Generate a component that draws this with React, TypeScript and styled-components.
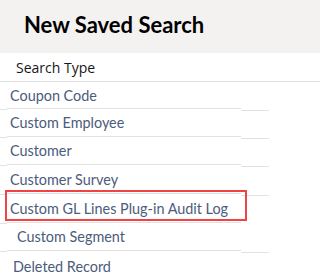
import * as React from "react";
import styled, { createGlobalStyle, css } from "styled-components";

type SearchType = {
  label: string;
  indent: number;
  height: number;
  highlighted?: boolean;
};

const searchTypes: SearchType[] = [
  { label: "Coupon Code", indent: 3, height: 27 },
  { label: "Custom Employee", indent: 3, height: 28 },
  { label: "Customer", indent: 3, height: 28 },
  { label: "Customer Survey", indent: 3, height: 29 },
  { label: "Custom GL Lines Plug-in Audit Log", indent: 3, height: 29, highlighted: true },
  { label: "Custom Segment", indent: 10, height: 28 },
  { label: "Deleted Record", indent: 6, height: 32 },
];

export default function App() {
  return (
    <>
      <GlobalStyle />
      <Page>
        <Header>
          <Title>New Saved Search</Title>
        </Header>
        <ColumnHead>Search Type</ColumnHead>
        <List>
          {searchTypes.map((item) => (
            <Row
              key={item.label}
              $indent={item.indent}
              $height={item.height}
              $highlighted={item.highlighted}
            >
              {item.label}
            </Row>
          ))}
        </List>
      </Page>
    </>
  );
}

const GlobalStyle = createGlobalStyle`
  html, body {
    margin: 0;
    padding: 0;
    background: #fff;
  }
  body {
    font-family: "Lato", "Liberation Sans", sans-serif;
  }
`;

const Page = styled.div`
  width: 100%;
  height: 274px;
  overflow: hidden;
  display: flex;
  flex-direction: column;
  background: #fff;
`;

const Header = styled.div`
  height: 53px;
  flex-shrink: 0;
  background: #f3f2f1;
  display: flex;
  align-items: center;
  padding: 0 0 5px 24px;
  box-sizing: border-box;
`;

const Title = styled.h1`
  margin: 0;
  font-family: "Lato", "Liberation Sans", sans-serif;
  font-weight: 700;
  font-size: 22px;
  color: #000;
`;

const ColumnHead = styled.div`
  height: 28px;
  flex-shrink: 0;
  display: flex;
  align-items: center;
  padding-left: 16px;
  border-bottom: 1px solid #e2e2e2;
  font-family: "Open Sans", "Liberation Sans", sans-serif;
  font-size: 14px;
  font-weight: 500;
  color: #161616;
`;

const List = styled.div`
  display: flex;
  flex-direction: column;
`;

const Row = styled.div<{ $indent: number; $height: number; $highlighted?: boolean }>`
  position: relative;
  flex-shrink: 0;
  margin-left: 7px;
  width: 234px;
  height: ${(p) => p.$height}px;
  display: flex;
  align-items: center;
  padding-left: ${(p) => p.$indent}px;
  box-sizing: border-box;
  border-bottom: 1px solid #e2e2e2;
  font-size: 14.4px;
  color: #4b5c7c;

  &::before {
    content: "";
    position: absolute;
    left: -7px;
    bottom: -2px;
    width: 7px;
    height: 1px;
    background: #e2e2e2;
  }

  &::after {
    content: "";
    position: absolute;
    left: 234px;
    bottom: -3px;
    width: 28px;
    height: 1px;
    background: #e2e2e2;
  }

  ${(p) =>
    p.$highlighted &&
    css`
      &::after {
        left: -2px;
        top: -4px;
        bottom: auto;
        width: 242px;
        height: 31px;
        background: transparent;
        border: 2px solid #f04444;
        box-sizing: border-box;
      }
    `}
`;
